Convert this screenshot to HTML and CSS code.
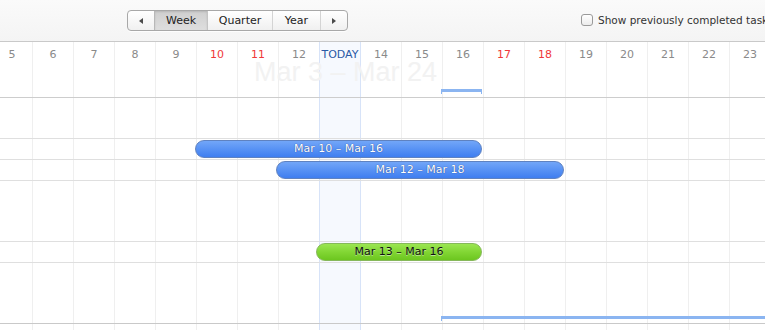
FILE: index.html
```html
<!DOCTYPE html>
<html lang="en">
<head>
    <meta charset="UTF-8">
    <title>Timeline</title>
    <link rel="stylesheet" href="styles.css">
</head>
<body>
    <div class="toolbar">
        <div class="seg">
            <div class="seg-btn arrow"><span class="tri tri-left"></span></div>
            <div class="seg-btn week active">Week</div>
            <div class="seg-btn quarter">Quarter</div>
            <div class="seg-btn year">Year</div>
            <div class="seg-btn arrow"><span class="tri tri-right"></span></div>
        </div>
        <label class="completed"><span class="check"></span>Show previously completed tasks</label>
    </div>

    <div class="timeline">
        <!-- day columns behind the rows -->
        <div class="grid">
            <div class="day"><span>5</span></div>
            <div class="day"><span>6</span></div>
            <div class="day"><span>7</span></div>
            <div class="day"><span>8</span></div>
            <div class="day"><span>9</span></div>
            <div class="day weekend"><span>10</span></div>
            <div class="day weekend"><span>11</span></div>
            <div class="day"><span>12</span></div>
            <div class="day today"><span>TODAY</span></div>
            <div class="day"><span>14</span></div>
            <div class="day"><span>15</span></div>
            <div class="day"><span>16</span></div>
            <div class="day weekend"><span>17</span></div>
            <div class="day weekend"><span>18</span></div>
            <div class="day"><span>19</span></div>
            <div class="day"><span>20</span></div>
            <div class="day"><span>21</span></div>
            <div class="day"><span>22</span></div>
            <div class="day"><span>23</span></div>
            <div class="day"><span>24</span></div>
        </div>

        <div class="rows">
            <div class="range-head">
                <div class="range-title">Mar 3 – Mar 24</div>
                <div class="bracket" style="margin-left: 441px; width: 41px;"></div>
            </div>
            <div class="row tall-40"></div>
            <div class="row">
                <div class="bar bar-blue" style="margin-left: 195px; width: 287px;">Mar 10 – Mar 16</div>
            </div>
            <div class="row">
                <div class="bar bar-blue" style="margin-left: 276px; width: 288px;">Mar 12 – Mar 18</div>
            </div>
            <div class="row tall-60"></div>
            <div class="row">
                <div class="bar bar-green" style="margin-left: 316px; width: 166px;">Mar 13 – Mar 16</div>
            </div>
            <div class="row tall-60 last">
                <div class="bracket bracket-open" style="margin-left: 441px; width: 330px;"></div>
            </div>
        </div>
    </div>
</body>
</html>
```

FILE: styles.css
```css
* {
    margin: 0;
    padding: 0;
    box-sizing: border-box;
}

body {
    width: 765px;
    height: 330px;
    overflow: hidden;
    background: #fff;
    font-family: "DejaVu Sans", "Liberation Sans", sans-serif;
    font-size: 11px;
    color: #222;
}

/* 顶部工具栏 */
.toolbar {
    height: 42px;
    display: flex;
    align-items: flex-start;
    padding-top: 10px;
    padding-left: 127px;
    background: linear-gradient(#fafafa, #f4f4f4);
    border-bottom: 1px solid #c9c9c9;
    white-space: nowrap;
    overflow: hidden;
}

.seg {
    flex: none;
    display: flex;
    height: 21px;
    border: 1px solid #a8a8a8;
    border-radius: 4px;
    overflow: hidden;
    background: linear-gradient(#ffffff, #f0f0f0);
    box-shadow: 0 1px 0 rgba(255, 255, 255, 0.8);
}

.seg-btn {
    flex: none;
    display: flex;
    align-items: center;
    justify-content: center;
    height: 100%;
    border-left: 1px solid #d4d4d4;
    color: #222;
    font-size: 11px;
}

.seg-btn:first-child {
    border-left: none;
}

.seg-btn.arrow {
    width: 27px;
}

.seg-btn:first-child.arrow {
    width: 26px;
}

.week { width: 53px; }
.quarter { width: 65px; }
.year { width: 48px; }

.seg-btn.active {
    background: linear-gradient(#cfcfcf, #dedede);
    border-left-color: #b8b8b8;
    box-shadow: inset 0 1px 2px rgba(0, 0, 0, 0.12);
}

.seg-btn.active + .seg-btn {
    border-left-color: #c4c4c4;
}

.tri {
    width: 0;
    height: 0;
    border-top: 3.5px solid transparent;
    border-bottom: 3.5px solid transparent;
}

.tri-left {
    border-right: 4px solid #4a4a4a;
}

.tri-right {
    border-left: 4px solid #4a4a4a;
}

.completed {
    flex: none;
    display: flex;
    align-items: center;
    margin-left: 233px;
    margin-top: 4px;
    color: #333;
    font-size: 10.5px;
}

.check {
    flex: none;
    width: 12px;
    height: 12px;
    margin-right: 5px;
    border: 1px solid #9a9a9a;
    border-radius: 3px;
    background: linear-gradient(#ffffff, #ececec);
}

/* 时间轴 */
.timeline {
    position: relative;
    height: 288px;
}

.grid {
    position: absolute;
    top: 0;
    bottom: 0;
    left: -8px;
    display: flex;
}

.day {
    flex: none;
    width: 41px;
    height: 100%;
    border-right: 1px solid #efefef;
    text-align: center;
    padding-top: 6px;
    color: #8a8a8a;
    font-size: 11px;
    line-height: 14px;
}

.day.weekend {
    color: #f0383a;
}

.day.today {
    width: 42px;
    margin-left: -1px;
    border-left: 1px solid #d7e3f8;
    border-right: 1px solid #d7e3f8;
    background: #f6f9fe;
    color: #2a5aa6;
}

.rows {
    position: absolute;
    top: 0;
    left: 0;
    right: 0;
    bottom: 0;
}

.range-head {
    height: 56px;
    border-bottom: 1px solid #cdcdcd;
    overflow: hidden;
}

.range-title {
    margin-left: 254px;
    margin-top: 17px;
    height: 28px;
    font-family: "Liberation Sans", sans-serif;
    font-size: 27px;
    line-height: 27px;
    color: #f2f2f2;
    white-space: nowrap;
}

.bracket {
    height: 5px;
    margin-top: 2px;
    border: 1px solid #8bb5f1;
    border-top-width: 3px;
    border-bottom: none;
}

.bracket-open {
    margin-top: 52px;
    border-right: none;
}

.row {
    height: 21px;
    padding-top: 1px;
    border-bottom: 1px solid #dfdfdf;
}

.row.tall-40 {
    height: 41px;
}

.row.tall-60 {
    height: 61px;
}

.row.last {
    border-bottom-color: #c9c9c9;
}

.bar {
    height: 18px;
    border-radius: 9px;
    text-align: center;
    line-height: 16px;
    font-size: 11px;
    white-space: nowrap;
}

.bar-blue {
    background: linear-gradient(#72a6f8, #5892f4 50%, #3f7ef0);
    border: 1px solid #5f82c0;
    color: #fff;
    text-shadow: 0 0 1px rgba(0, 20, 80, 0.8);
}

.bar-green {
    background: linear-gradient(#9be652, #82d634 50%, #6cc61f);
    border: 1px solid #86b85a;
    color: #111;
    text-shadow: 0 1px 0 rgba(255, 255, 255, 0.5);
}
```
